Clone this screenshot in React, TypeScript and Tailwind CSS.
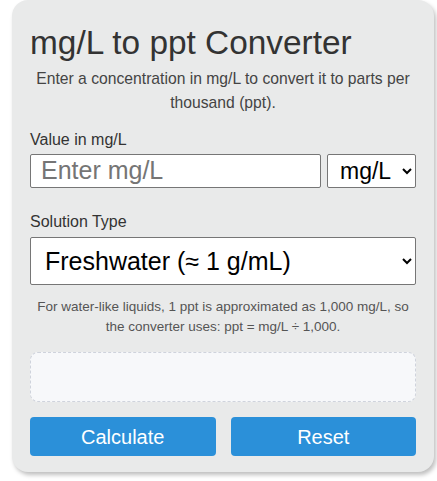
import React from "react";

export default function App() {
  return (
    <div className="w-[437px] h-[481px] bg-white" style={{ fontFamily: '"Liberation Sans", Arial, sans-serif' }}>
      <div className="ml-[12px] w-[422px] h-[472px] rounded-[16px] bg-[#e9eaea] shadow-[2px_3px_4px_rgba(0,0,0,0.25)] px-[18px] pt-[24px] box-border">
        <h1 className="text-[33.4px] leading-[38px] text-[#333333] m-0">mg/L to ppt Converter</h1>
        <p className="text-[15.7px] leading-[24px] text-[#444444] text-center mt-[5px]">
          Enter a concentration in mg/L to convert it to parts per thousand (ppt).
        </p>
        <label className="block text-[16px] leading-[20px] text-[#333333] mt-[15px]">Value in mg/L</label>
        <div className="flex gap-[6px] mt-[4px]">
          <input
            placeholder="Enter mg/L"
            className="w-[291px] h-[34px] border border-[#767676] rounded-[2px] bg-white px-[10px] text-[25px] text-black placeholder:text-[#757575] outline-none"
          />
          <select className="w-[91px] h-[34px] border border-[#767676] rounded-[2px] bg-white pl-[8px] text-[23px] text-black">
            <option>mg/L</option>
          </select>
        </div>
        <label className="block text-[16px] leading-[20px] text-[#333333] mt-[24px]">Solution Type</label>
        <select className="w-full h-[48px] mt-[5px] border border-[#767676] rounded-[2px] bg-white pl-[10px] text-[25px] text-black">
          <option>Freshwater (≈ 1 g/mL)</option>
        </select>
        <p className="text-[13.5px] leading-[20px] text-[#555555] text-center mt-[12px]">
          For water-like liquids, 1 ppt is approximated as 1,000 mg/L, so the converter uses: ppt = mg/L ÷ 1,000.
        </p>
        <div className="mt-[15px] h-[50px] rounded-[8px] border border-dashed border-[#cfd3dc] bg-[#f7f8fa]"></div>
        <div className="flex gap-[15px] mt-[15px]">
          <button className="flex-1 h-[39px] rounded-[4px] bg-[#2b90d9] text-white text-[20px]">Calculate</button>
          <button className="flex-1 h-[39px] rounded-[4px] bg-[#2b90d9] text-white text-[20px]">Reset</button>
        </div>
      </div>
    </div>
  );
}
